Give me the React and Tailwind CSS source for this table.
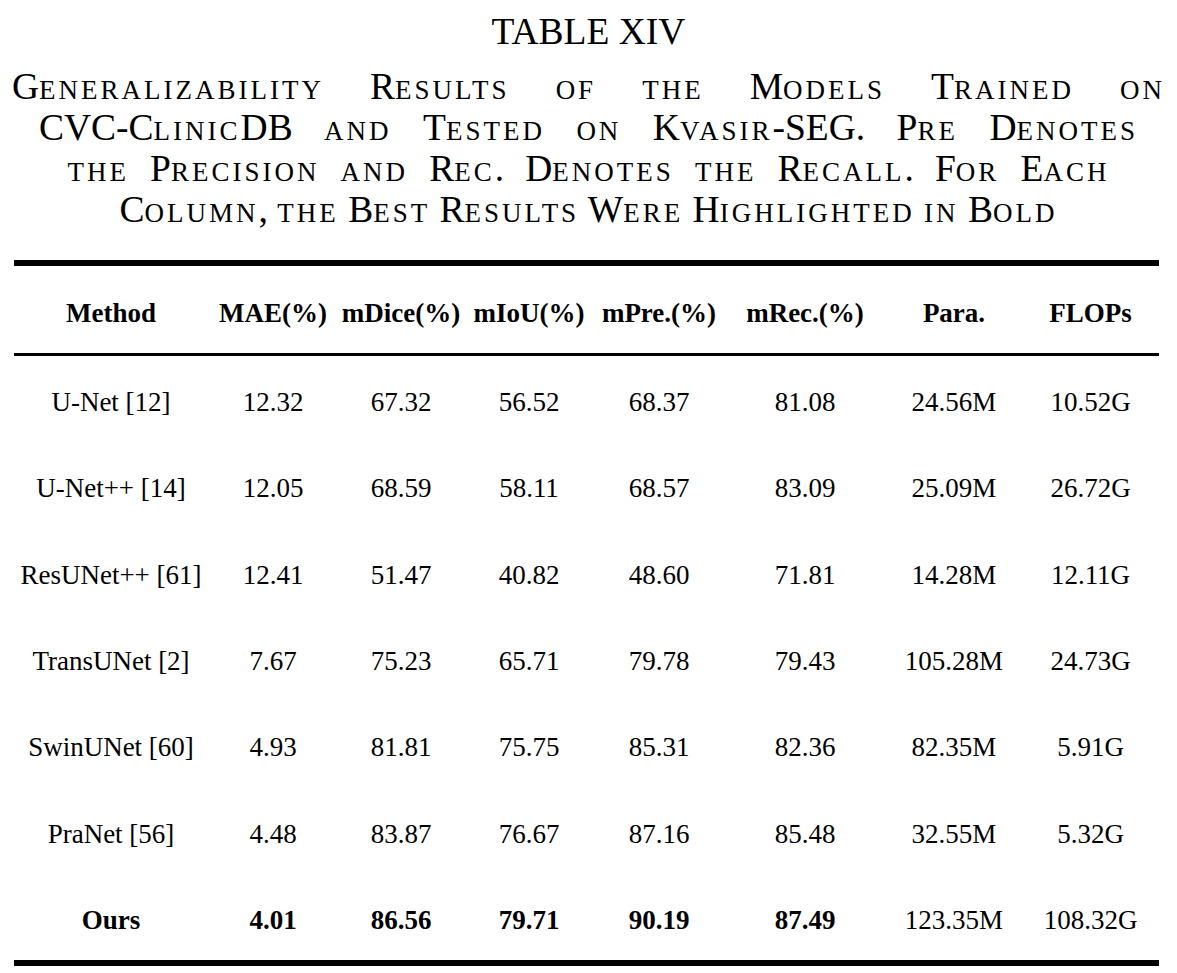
const cols = ['Method', 'MAE(%)', 'mDice(%)', 'mIoU(%)', 'mPre.(%)', 'mRec.(%)', 'Para.', 'FLOPs']

const rows = [
  ['U-Net [12]', '12.32', '67.32', '56.52', '68.37', '81.08', '24.56M', '10.52G'],
  ['U-Net++ [14]', '12.05', '68.59', '58.11', '68.57', '83.09', '25.09M', '26.72G'],
  ['ResUNet++ [61]', '12.41', '51.47', '40.82', '48.60', '71.81', '14.28M', '12.11G'],
  ['TransUNet [2]', '7.67', '75.23', '65.71', '79.78', '79.43', '105.28M', '24.73G'],
  ['SwinUNet [60]', '4.93', '81.81', '75.75', '85.31', '82.36', '82.35M', '5.91G'],
  ['PraNet [56]', '4.48', '83.87', '76.67', '87.16', '85.48', '32.55M', '5.32G'],
]

// ours: first six cells bold, params/flops regular
const ours = ['Ours', '4.01', '86.56', '79.71', '90.19', '87.49', '123.35M', '108.32G']

const grid = 'grid grid-cols-[194px_130px_126px_130px_130px_162px_136px_137px]'

// latex-style small caps: lowercase runs become wider, smaller capitals
function Sc({ text }) {
  const parts = text.match(/[a-z]+|[^a-z]+/g) || []
  return (
    <span className="whitespace-nowrap">
      {parts.map((p, i) =>
        /[a-z]/.test(p) ? (
          <span key={i} className="uppercase text-[27px] leading-none tracking-[3px]">{p}</span>
        ) : (
          <span key={i}>{p}</span>
        )
      )}
    </span>
  )
}

function CaptionLine({ words, width }) {
  return (
    <div className={`mx-auto flex justify-between h-[41px] leading-[41px] ${width}`}>
      {words.map((w, i) => (
        <Sc key={i} text={w} />
      ))}
    </div>
  )
}

export default function App() {
  return (
    <div className="min-h-[973px] bg-white text-black font-['Liberation_Serif'] pt-[11px]">
      <div className="text-center text-[37.5px] leading-[41px]">TABLE XIV</div>

      <div className="mt-[14px] text-[37.5px]">
        <CaptionLine
          width="w-[1153px]"
          words={['Generalizability', 'Results', 'of', 'the', 'Models', 'Trained', 'on']}
        />
        <CaptionLine
          width="w-[1099px]"
          words={['CVC-ClinicDB', 'and', 'Tested', 'on', 'Kvasir-SEG.', 'Pre', 'Denotes']}
        />
        <CaptionLine
          width="w-[1042px]"
          words={['the', 'Precision', 'and', 'Rec.', 'Denotes', 'the', 'Recall.', 'For', 'Each']}
        />
        <div className="text-center h-[41px] leading-[41px]">
          <Sc text="Column, the Best Results Were Highlighted in Bold" />
        </div>
      </div>

      <div className="ml-[14px] mt-[30px] w-[1145px] text-[27px]">
        <div className="h-[6px] bg-black" />
        <div className={`${grid} h-[87px] pt-[6px] items-center font-bold`}>
          {cols.map((c) => (
            <div key={c} className="text-center leading-[30px] whitespace-nowrap">{c}</div>
          ))}
        </div>
        <div className="h-[3px] bg-black" />
        {rows.map((r) => (
          <div key={r[0]} className={`${grid} h-[86.3px] pt-[6px] items-center`}>
            {r.map((v, i) => (
              <div key={i} className="text-center leading-[30px] whitespace-nowrap">{v}</div>
            ))}
          </div>
        ))}
        <div className={`${grid} h-[86.3px] pt-[6px] items-center`}>
          {ours.map((v, i) => (
            <div key={i} className={`text-center leading-[30px] whitespace-nowrap ${i < 6 ? 'font-bold' : ''}`}>
              {v}
            </div>
          ))}
        </div>
        <div className="h-[6px] bg-black" />
      </div>
    </div>
  )
}
